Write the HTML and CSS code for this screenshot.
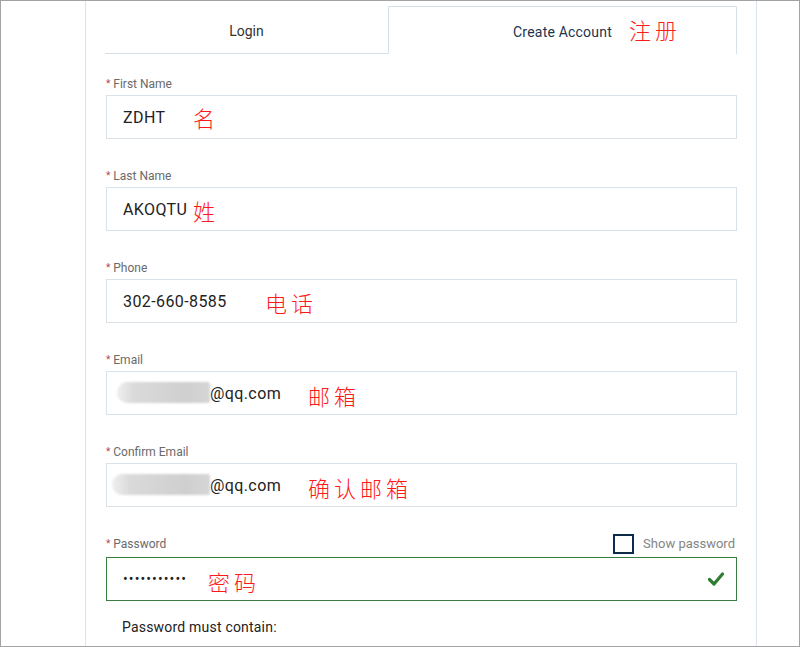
FILE: index.html
```html
<!DOCTYPE html>
<html lang="en">
<head>
<meta charset="utf-8">
<title>Create Account</title>
<link rel="stylesheet" href="styles.css">
</head>
<body>
<div class="frame">
  <div class="panel">
    <div class="tabs">
      <div class="tab">Login</div>
      <div class="tab tab-active">Create Account<span class="note note-tab">注册</span></div>
    </div>

    <div class="field">
      <div class="label"><span class="req">*</span> First Name</div>
      <div class="input">ZDHT<span class="note note-first">名</span></div>
    </div>

    <div class="field">
      <div class="label"><span class="req">*</span> Last Name</div>
      <div class="input">AKOQTU<span class="note note-last">姓</span></div>
    </div>

    <div class="field">
      <div class="label"><span class="req">*</span> Phone</div>
      <div class="input">302-660-8585<span class="note note-phone">电话</span></div>
    </div>

    <div class="field">
      <div class="label"><span class="req">*</span> Email</div>
      <div class="input input-email"><span class="blur"></span>@qq.com<span class="note note-email">邮箱</span></div>
    </div>

    <div class="field">
      <div class="label"><span class="req">*</span> Confirm Email</div>
      <div class="input input-email"><span class="blur blur-wide"></span>@qq.com<span class="note note-email">确认邮箱</span></div>
    </div>

    <div class="field field-pass">
      <div class="label label-row">
        <span><span class="req">*</span> Password</span>
        <span class="show"><span class="checkbox"></span>Show password</span>
      </div>
      <div class="input input-valid"><span class="dots">•••••••••••</span><span class="note note-pass">密码</span>
        <svg class="check" width="16" height="14" viewBox="0 0 16 14"><path d="M1.5 7.5 L6 12 L14.5 2" fill="none" stroke="#2e7d32" stroke-width="3.2" stroke-linecap="round" stroke-linejoin="round"/></svg>
      </div>
    </div>

    <div class="rules">Password must contain:</div>
  </div>
</div>
</body>
</html>
```

FILE: styles.css
```css
* { box-sizing: border-box; }
html, body { margin: 0; padding: 0; background: #fff; }
body { font-family: Roboto, "Noto Sans", Arial, sans-serif; }

.frame {
  width: 800px;
  height: 647px;
  border: 1px solid #a3a3a3;
  overflow: hidden;
  background: #fff;
}

.panel {
  margin-left: 84px;
  width: 672px;
  height: 100%;
  border-left: 1px solid #dbe4ee;
  border-right: 1px solid #dbe4ee;
  padding: 5px 19px 0 19px;
}

.tabs {
  display: flex;
  height: 48px;
  margin-bottom: 21px;
}
.tab {
  width: 283px;
  border-bottom: 1px solid #d6e0eb;
  display: flex;
  align-items: center;
  justify-content: center;
  font-size: 14px;
  color: #333;
  padding-top: 3px;
}
.tab-active {
  position: relative;
  flex: 1;
  border: 1px solid #d6e0eb;
  border-bottom: none;
  color: #22334f;
  letter-spacing: 0.2px;
  padding-top: 3px;
}

.note {
  position: absolute;
  font-family: "Noto Sans CJK SC", sans-serif;
  font-weight: 300;
  color: #ff1a1a;
  font-size: 22px;
  letter-spacing: 4px;
  line-height: 26px;
  white-space: nowrap;
}
.note-tab { left: 240px; top: 9px; }

.field {
  padding-left: 1px;
  margin-bottom: 28px;
}
.label {
  font-size: 12px;
  line-height: 18px;
  color: #6a6a6a;
  margin-bottom: 2px;
}
.req {
  color: #b04a4a;
  font-size: 10px;
  vertical-align: 1px;
}
.label-row {
  display: flex;
  justify-content: space-between;
  align-items: center;
  height: 20px;
  margin-top: -1px;
  margin-bottom: 3px;
  padding-right: 2px;
}
.show {
  display: flex;
  align-items: center;
  font-size: 13px;
  color: #858585;
}
.checkbox {
  width: 21px;
  height: 20px;
  border: 2px solid #0f2b4c;
  margin-right: 9px;
  margin-left: -1px;
}

.input {
  position: relative;
  height: 44px;
  border: 1px solid #d9e1e9;
  display: flex;
  align-items: center;
  padding-left: 16px;
  font-size: 16px;
  letter-spacing: 0.4px;
  color: #222;
}
.input-email { padding-left: 10px; }
.blur {
  display: inline-block;
  width: 93px;
  height: 21px;
  border-radius: 10px 2px 2px 10px;
  background: linear-gradient(90deg, #efefef 0%, #dadada 18%, #d4d4d4 50%, #cfcfcf 75%, #d6d6d6 100%);
  filter: blur(1px);
  margin-top: -2px;
}
.blur-wide { width: 98px; margin-left: -5px; }

.note-first { left: 86px; top: 8px; }
.note-last { left: 86px; top: 9px; }
.note-phone { left: 158px; top: 9px; }
.note-email { left: 201px; top: 10px; }
.note-pass { left: 101px; top: 10px; }

.input-valid { border-color: #3a7d3e; }
.dots { font-size: 14px; letter-spacing: 1.1px; color: #222; }
.check { position: absolute; right: 12px; top: 14px; }

.rules {
  margin-top: -10px;
  padding-left: 17px;
  font-size: 14px;
  color: #222;
  letter-spacing: 0.2px;
}
```
